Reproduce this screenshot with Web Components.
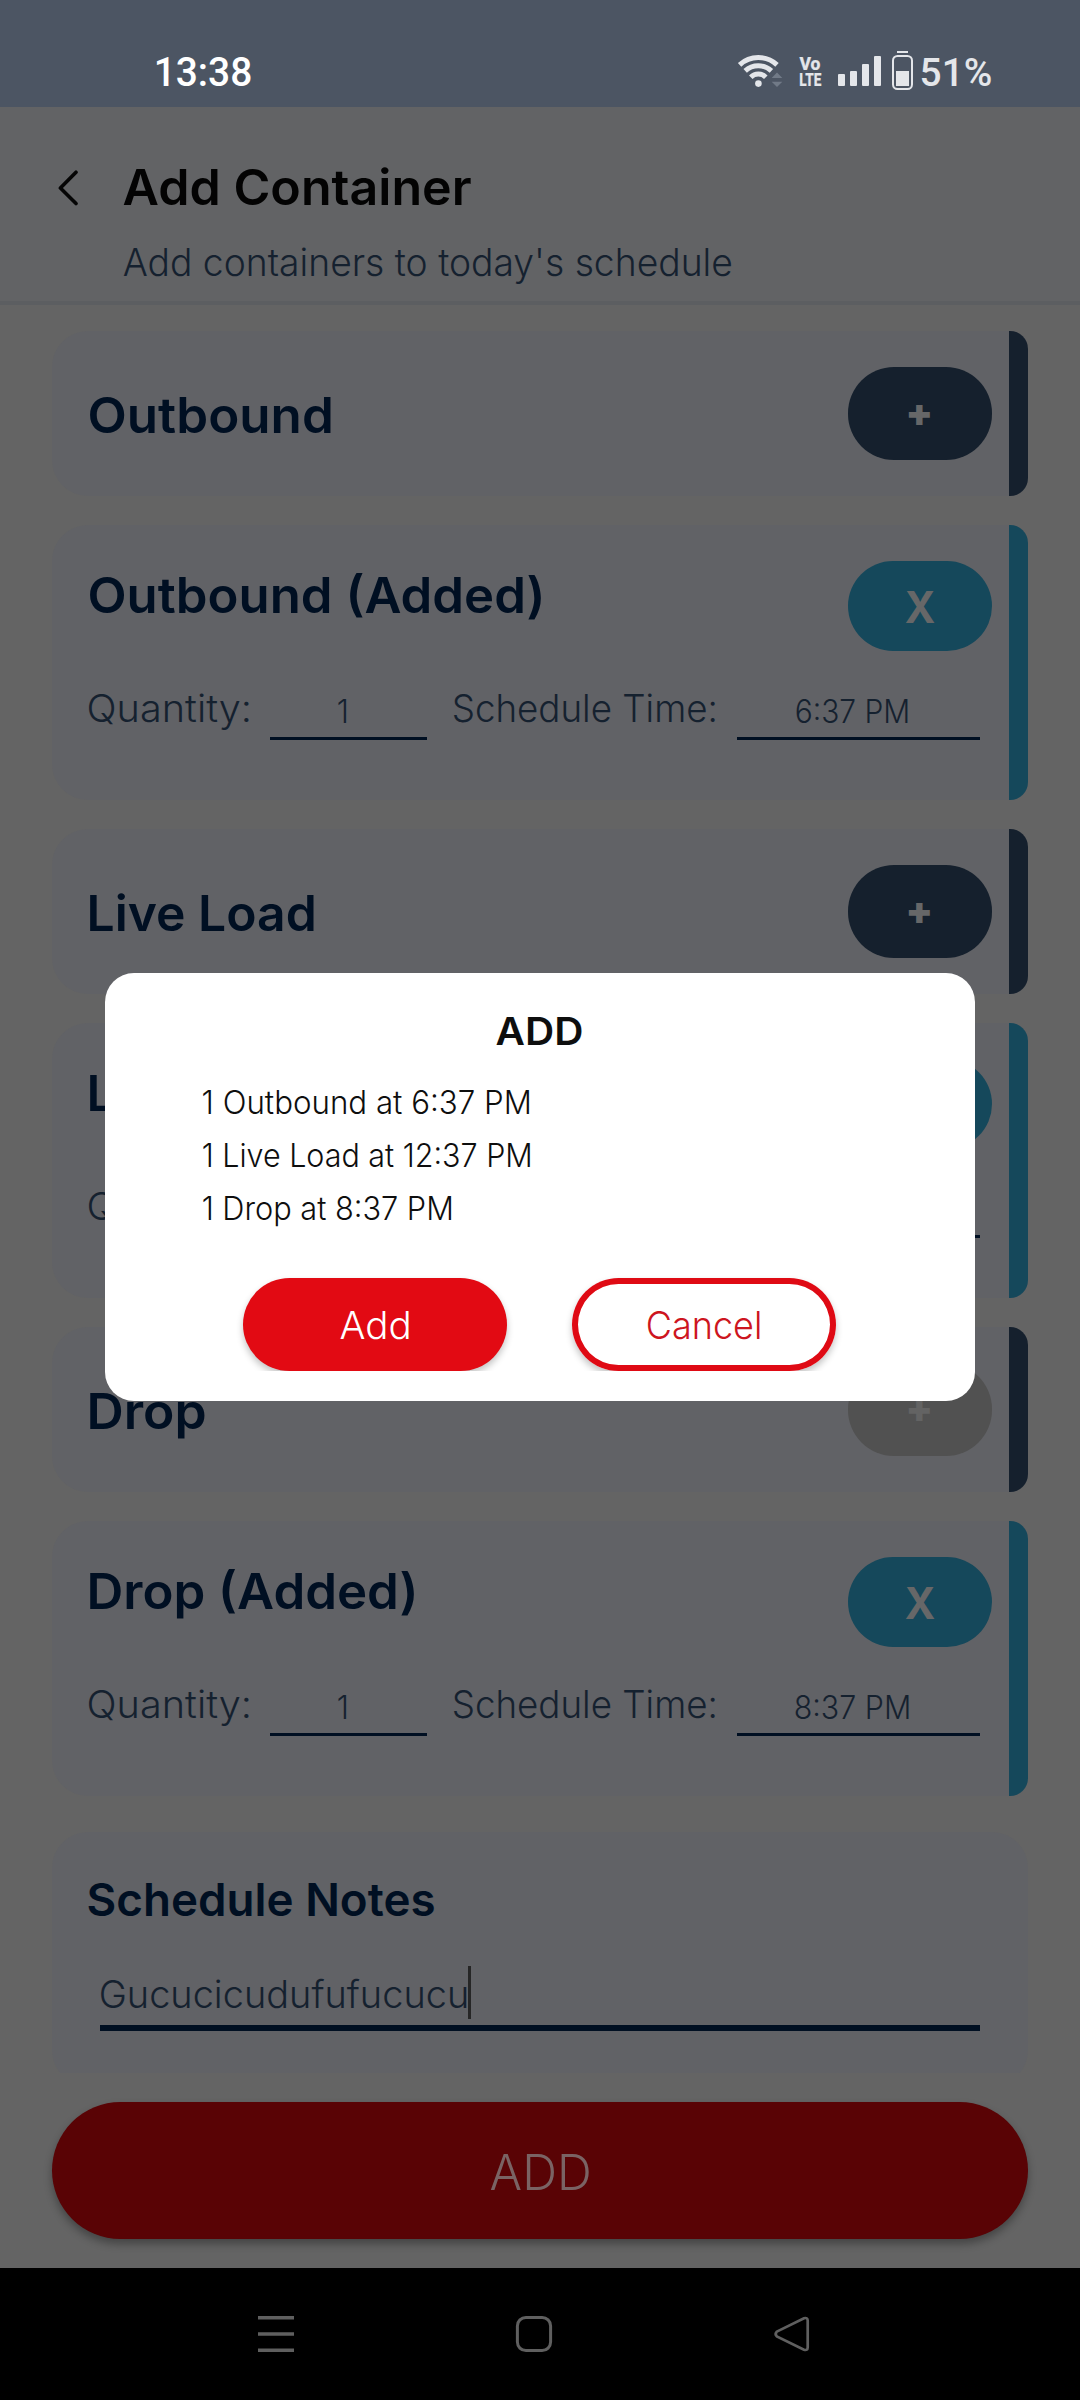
<!DOCTYPE html>
<html lang="en">
<head>
<meta charset="utf-8">
<title>Add Container</title>
<style>
html,body{margin:0;padding:0;background:#646464}
body{font-family:Inter,"Liberation Sans",sans-serif;width:1080px;height:2400px;overflow:hidden}
</style>
</head>
<body>
<app-screen></app-screen>
<script>
const define = (name, html, setup) => {
  const tpl = document.createElement('template');
  tpl.innerHTML = html;
  customElements.define(name, class extends HTMLElement {
    connectedCallback() {
      if (this.shadowRoot) return;
      this.attachShadow({mode: 'open'}).appendChild(tpl.content.cloneNode(true));
      if (setup) setup(this, this.shadowRoot);
    }
  });
};

/* One line of text: `w` is the drawn width, `base` the distance from the box top to the baseline. */
const ctx = document.createElement('canvas').getContext('2d');
customElements.define('ui-text', class extends HTMLElement {
  connectedCallback() {
    if (this.shadowRoot) return;
    const root = this.attachShadow({mode: 'open'});
    const a = n => this.getAttribute(n);
    const size = +a('size'), w = +a('w'), base = +a('base');
    const weight = a('weight') || 300, family = a('family') || 'Inter';
    ctx.font = `${weight} ${size}px ${family}`;
    const m = ctx.measureText(a('text'));
    const ink = m.actualBoundingBoxLeft + m.actualBoundingBoxRight;
    const k = (Math.round(m.fontBoundingBoxAscent) - Math.round(m.fontBoundingBoxDescent)) / 2;
    const s = w / ink;
    root.innerHTML = `<style>
      :host{display:block;flex:none;width:${w}px;height:${base}px;color:${a('color') || 'inherit'}}
      span{display:block;width:max-content;white-space:pre;font:${weight} ${size}px/${2 * (base - k)}px ${family},sans-serif;
        transform-origin:0 0;transform:translate(${m.actualBoundingBoxLeft * s - 0.4}px,${+a('dy') || 0}px) scaleX(${s})}
    </style><span></span>`;
    root.querySelector('span').textContent = a('text');
  }
});

define('status-bar', `<style>
:host{display:flex;height:107px;background:#4c5563;flex:none;box-sizing:border-box;padding-left:157px}
.gap{flex:1}
svg{display:block;width:182px;height:107px;flex:none}
.pct{padding-right:89px}
</style>
<ui-text text="13:38" size="40" weight="500" family="Roboto" w="94" base="86" color="#fff"></ui-text>
<div class="gap"></div>
<svg viewBox="738 0 182 107">
 <g fill="none" stroke="#e4e6ea" stroke-width="5">
  <path d="M740.6 64.8A27.6 27.6 0 0 1 778 64.8"/>
  <path d="M746.2 70.9A19.2 19.2 0 0 1 772.4 70.9"/>
  <path d="M751.8 77.2A10.6 10.6 0 0 1 766.8 77.2"/>
 </g>
 <g fill="#e4e6ea">
  <circle cx="759.4" cy="83.6" r="3.3"/>
  <rect x="839" y="74" width="7" height="12" rx="1"/><rect x="851" y="71" width="7" height="15" rx="1"/>
  <rect x="863" y="64" width="7" height="22" rx="1"/><rect x="875" y="56" width="7" height="30" rx="1"/>
  <rect x="898" y="51" width="11" height="2"/><rect x="897" y="71" width="13" height="15"/>
 </g>
 <path fill="#717a87" d="M772.7 78L778 72.5L783.3 78ZM772.7 81.7L778 87L783.3 81.7Z"/>
 <rect x="894" y="56" width="19" height="33" rx="4.5" fill="none" stroke="#e4e6ea" stroke-width="2"/>
 <g fill="#e4e6ea" stroke="#e4e6ea" stroke-width=".2" font-family="Roboto" font-weight="800">
  <text x="800.5" y="69.5" font-size="18.5" textLength="21" lengthAdjust="spacingAndGlyphs">Vo</text>
  <text x="800.3" y="85.8" font-size="19" textLength="22" lengthAdjust="spacingAndGlyphs">LTE</text>
 </g>
</svg>
<ui-text class="pct" style="margin-left:2.8px" text="51%" size="39" weight="500" family="Roboto" w="69" base="86" color="#e4e6ea"></ui-text>`);

define('page-header', `<style>
:host{display:flex;height:198px;box-sizing:border-box;background:#626365;border-bottom:4px solid #5c5e61;flex:none}
svg{width:20px;height:36px;margin:63px 46px 0 58px;flex:none}
.t{display:flex;flex-direction:column}
</style>
<svg viewBox="0 0 20 36"><path d="M18 2.2L2.4 18L18 33.6" fill="none" stroke="#050505" stroke-width="3.6" stroke-linecap="round" stroke-linejoin="round"/></svg>
<div class="t"><ui-text text="Add Container" size="49" weight="600" w="347.5" base="98.3" color="#030303"></ui-text>
<ui-text text="Add containers to today's schedule" size="38.5" w="608" base="71" color="#15212f"></ui-text></div>`);

define('pill-button', `<style>
:host{display:flex;flex:none;justify-content:center;width:144px;height:93px;border-radius:46px;background:#15202d;margin-top:36px}
:host([kind=x]){height:90px;border-radius:45px;background:#15485b}
:host([off]){background:#515151}
</style><div></div>`, (h, r) => {
  r.querySelector('div').innerHTML = h.getAttribute('kind') === 'x'
    ? '<ui-text style="margin-left:1px" text="X" size="43.5" weight="700" w="29.5" base="62.5" color="#666768"></ui-text>'
    : `<ui-text style="margin-left:.8px" text="+" size="38" weight="900" w="22" base="59.5" color="${h.hasAttribute('off') ? '#636363' : '#666768'}"></ui-text>`;
});

define('line-field', `<style>
:host{display:flex;justify-content:center;flex:none;box-sizing:border-box;height:89px;border-bottom:3px solid #000f22;padding-right:12.5px}
</style><slot></slot>`);

define('container-card', `<style>
:host{display:flex;flex:none;height:165px;border-radius:36px 18px 18px 36px;background:#616266}
:host([time]){height:275px}
.main{flex:1;display:flex;flex-direction:column}
.head{display:flex;justify-content:space-between;padding:0 17px 0 38px}
.row{display:flex;padding-left:37px;width:900px}
.bar{width:19px;flex:none;background:#15202d;border-radius:0 18px 18px 0}
:host([time]) .bar{background:#15485b}
</style><div class="main"><div class="head"></div></div><div class="bar"></div>`, (h, r) => {
  const a = n => h.getAttribute(n), time = a('time');
  const dx = a('name')[0] === 'O' ? 0 : 0.4;
  r.querySelector('.head').innerHTML =
    `<ui-text style="margin-left:${dx}px" text="${a('name')}" size="49" weight="600" w="${a('w')}" base="${time ? 88 : 102.3}" color="#000f22"></ui-text>
     <pill-button ${time ? 'kind="x"' : ''} ${h.hasAttribute('off') ? 'off' : ''}></pill-button>`;
  if (time) {
    const row = document.createElement('div');
    row.className = 'row';
    row.innerHTML = `<ui-text text="Quantity:" size="38.5" w="160.5" base="71.3" color="#15212f"></ui-text>
      <line-field style="width:157px;margin:0 27px 0 20.5px"><ui-text dy=".5" text="1" size="32" w="8.7" base="71.4" color="#15212f"></ui-text></line-field>
      <ui-text text="Schedule Time:" size="38.5" w="261.5" base="71.3" color="#15212f"></ui-text>
      <line-field style="width:243px;margin-left:21.5px"><ui-text dy=".5" text="${time}" size="32" w="${a('tw')}" base="71.4" color="#15212f"></ui-text></line-field>`;
    r.querySelector('.main').appendChild(row);
  }
});

define('notes-card', `<style>
:host{display:block;height:241px;overflow:hidden;margin-top:7px;flex:none}
.c{height:254px;box-sizing:border-box;background:#616266;border-radius:36px;padding-left:36.5px;display:flex;flex-direction:column}
.in{display:flex;width:880px;height:108.7px;margin-left:11.5px;border-bottom:6px solid #000f22}
.cur{width:3px;height:53px;background:#262626;margin:49.5px 0 0 1px}
</style><div class="c"><ui-text text="Schedule Notes" size="45.5" weight="600" w="346" base="84.3" color="#000f22"></ui-text>
<div class="in"><ui-text style="margin-left:1px" text="Gucucicudufufucucu" size="38.5" w="366" base="92.2" color="#15212f"></ui-text><div class="cur"></div></div></div>`);

define('submit-bar', `<style>
:host{display:flex;justify-content:center;height:137px;border-radius:69px;background:#590305;margin:29px 52px;box-shadow:0 5px 9px rgba(0,0,0,.32);flex:none}
</style><ui-text text="ADD" size="49" w="99" base="88" color="#7a6364"></ui-text>`);

define('nav-bar', `<style>
:host{display:flex;height:132px;background:#000;align-items:center;flex:none}
svg{width:1080px;height:132px}
</style><svg viewBox="0 2268 1080 132" fill="none" stroke="#5f5f5f" stroke-width="3">
<path stroke-width="3.6" d="M258 2317.8H294M258 2334H294M258 2350.3H294"/>
<rect x="517.4" y="2317.4" width="33.2" height="33.2" rx="8.5"/>
<path d="M776.8 2331.6L804 2318.3Q807.6 2317.2 807.7 2320.5V2347.5Q807.6 2350.8 804 2349.7L776.8 2336.4Q774.5 2334 776.8 2331.6Z" stroke-width="2.7"/></svg>`);

define('dialog-button', `<style>
:host{display:flex;justify-content:center;width:264px;height:93px;box-sizing:border-box;border-radius:47px;background:#e20a13;box-shadow:0 4px 7px rgba(0,0,0,.24)}
:host([outline]){background:#fff;box-shadow:inset 0 0 0 6px #df0a14,0 4px 7px rgba(0,0,0,.24)}
</style><slot></slot>`);

define('confirm-dialog', `<style>
:host{display:flex;flex-direction:column;position:absolute;left:105px;top:973px;width:870px;height:427.5px;border-radius:29px;background:#fff;color:#0e0e0e}
.t{display:flex;justify-content:center;padding-right:2.6px}
.list{padding-left:98.3px;margin-top:15.3px;flex:none}
.btns{display:flex;gap:65px;margin-top:58.8px;height:93px;padding:0 138px;clip-path:inset(-20px 0 0 0)}
</style>
<div class="t"><ui-text text="ADD" size="38.5" weight="600" w="86" base="72"></ui-text></div>
<div class="list">
<ui-text dy=".5" text="1 Outbound at 6:37 PM" size="32" w="326.5" base="53"></ui-text>
<ui-text dy=".5" text="1 Live Load at 12:37 PM" size="32" w="327.5" base="53"></ui-text>
<ui-text dy=".5" text="1 Drop at 8:37 PM" size="32" w="248.5" base="53"></ui-text></div>
<div class="btns"><dialog-button><ui-text text="Add" size="38.5" w="68" base="61.7" color="#fff"></ui-text></dialog-button>
<dialog-button outline><ui-text text="Cancel" size="38.5" w="112" base="61.7" color="#cd1520"></ui-text></dialog-button></div>`);

define('app-screen', `<style>
:host{display:flex;flex-direction:column;width:1080px;height:2400px;position:relative;overflow:hidden;background:#646464}
.list{display:flex;flex-direction:column;gap:29px;padding:26px 52px 0;flex:none}
</style>
<status-bar></status-bar><page-header></page-header>
<div class="list">
<container-card name="Outbound" w="241.5"></container-card>
<container-card name="Outbound (Added)" w="451.5" time="6:37 PM" tw="111"></container-card>
<container-card name="Live Load" w="224.5"></container-card>
<container-card name="Live Load (Added)" w="434" time="12:37 PM" tw="128"></container-card>
<container-card name="Drop" w="115.3" off></container-card>
<container-card name="Drop (Added)" w="324.5" time="8:37 PM" tw="113"></container-card>
<notes-card></notes-card>
</div>
<submit-bar></submit-bar><nav-bar></nav-bar>
<confirm-dialog></confirm-dialog>`);
</script>
</body>
</html>
